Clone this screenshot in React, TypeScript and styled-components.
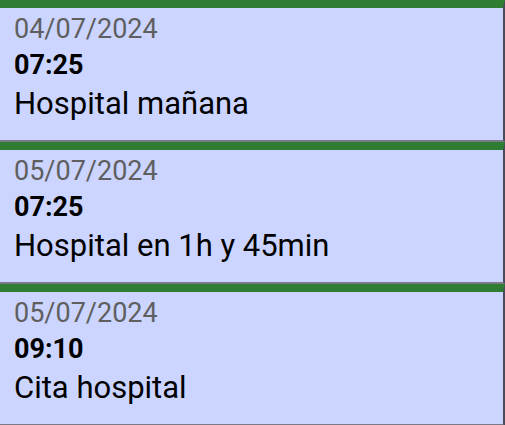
import styled, { createGlobalStyle } from "styled-components";

type Reminder = {
  date: string;
  time: string;
  text: string;
};

const reminders: Reminder[] = [
  { date: "04/07/2024", time: "07:25", text: "Hospital mañana" },
  { date: "05/07/2024", time: "07:25", text: "Hospital en 1h y 45min" },
  { date: "05/07/2024", time: "09:10", text: "Cita hospital" },
];

const GlobalStyle = createGlobalStyle`
  html, body {
    margin: 0;
    padding: 0;
    background: #ffffff;
  }
  body {
    font-family: Roboto, "Liberation Sans", sans-serif;
  }
`;

const List = styled.div`
  display: flex;
  flex-direction: column;
  width: 505px;
`;

const Card = styled.div`
  box-sizing: border-box;
  height: 142px;
  display: flex;
  flex-direction: column;
  padding: 5px 14px 0;
  background-color: #ccd5ff;
  border-top: 8px solid #2e7d32;
  border-bottom: 2px solid #7a7a88;
  border-right: 2px solid #4a4a5a;
`;

const DateLabel = styled.div`
  font-size: 27px;
  line-height: 32px;
  color: #5f5f5f;
`;

const TimeLabel = styled.div`
  margin-top: 5px;
  font-size: 27px;
  font-weight: 700;
  line-height: 30px;
  color: #000000;
`;

const Message = styled.div`
  margin-top: 6px;
  font-size: 31px;
  line-height: 36px;
  color: #000000;
`;

function App() {
  return (
    <>
      <GlobalStyle />
      <List>
        {reminders.map((r, i) => (
          <Card key={i}>
            <DateLabel>{r.date}</DateLabel>
            <TimeLabel>{r.time}</TimeLabel>
            <Message>{r.text}</Message>
          </Card>
        ))}
      </List>
    </>
  );
}

export default App;
